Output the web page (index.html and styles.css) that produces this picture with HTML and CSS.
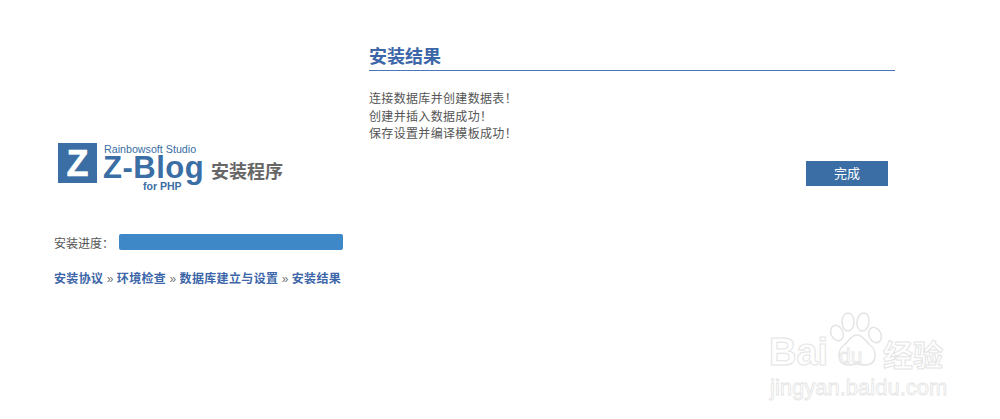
FILE: index.html
```html
<!DOCTYPE html>
<html lang="zh-CN">
<head>
<meta charset="utf-8">
<title>Z-Blog 安装程序</title>
<link rel="stylesheet" href="styles.css">
</head>
<body>
<main class="page">
  <aside class="side">
    <div class="logo">
      <div class="logo-mark">Z</div>
      <div class="logo-word">
        <div class="logo-small">Rainbowsoft Studio</div>
        <div class="logo-big">Z-Blog</div>
        <div class="logo-php">for PHP</div>
      </div>
      <div class="logo-title">安装程序</div>
    </div>
    <div class="progress">
      <span class="progress-label">安装进度：</span>
      <div class="progress-bar"></div>
    </div>
    <nav class="steps"><b>安装协议</b> <i>»</i> <b>环境检查</b> <i>»</i> <b>数据库建立与设置</b> <i>»</i> <b>安装结果</b></nav>
  </aside>
  <section class="content">
    <h2 class="title">安装结果</h2>
    <div class="messages">
      <p>连接数据库并创建数据表！</p>
      <p>创建并插入数据成功！</p>
      <p>保存设置并编译模板成功！</p>
    </div>
    <div class="actions"><button class="finish">完成</button></div>
  </section>
</main>
<div class="watermark">
  <svg class="paw" width="58" height="58" viewBox="0 0 58 58">
    <g fill="#fff" stroke="#e4e4e4" stroke-width="1.500">
      <ellipse cx="9" cy="22" rx="6" ry="8" transform="rotate(-25 9 22)"/>
      <ellipse cx="20" cy="11" rx="6" ry="9"/>
      <ellipse cx="35" cy="11" rx="6" ry="9" transform="rotate(8 35 11)"/>
      <ellipse cx="47" cy="24" rx="6" ry="8" transform="rotate(-25 47 24)"/>
      <path d="M29 24c6 0 8 6 13 10 7 5 8 20-5 20-3 0-5-1-8-1s-5 1-8 1c-13 0-12-15-5-20 5-4 7-10 13-10z"/>
    </g>
  </svg>
  <span class="wm-bai">Bai</span><span class="wm-du">du</span><span class="wm-cn">经验</span>
  <span class="wm-url">jingyan.baidu.com</span>
</div>
</body>
</html>
```
FILE: styles.css
```css
* { box-sizing: border-box; }
html, body { margin: 0; height: 100%; background: #fff; overflow: hidden; }
body { font-family: "Liberation Sans", "Noto Sans CJK SC", sans-serif; color: #555; font-size: 12px; }

.page { display: flex; width: 1000px; padding-left: 54px; }

.side { width: 291px; padding-top: 143px; flex: none; }

.logo { display: flex; height: 50px; padding-left: 4px; }
.logo-mark {
  width: 39px; height: 40px; background: #3a6ea5; color: #fff;
  font: bold 36px/41px "Liberation Sans", sans-serif; text-align: center;
  -webkit-text-stroke: 0.500px #fff;
}
.logo-word { width: 114px; padding-left: 6px; color: #3a6ea5; font-family: "Liberation Sans", sans-serif; }
.logo-small { font-size: 10.700px; line-height: 11px; padding-left: 1px; padding-top: 1px; white-space: nowrap; }
.logo-big { font-size: 31px; font-weight: bold; line-height: 28px; letter-spacing: 0.500px; white-space: nowrap; margin-top: -1.500px; }
.logo-php { font-size: 10.500px; font-weight: bold; line-height: 10px; padding-left: 40px; white-space: nowrap; margin-top: -1px; }
.logo-title { font: bold 18px/24px "Noto Sans CJK SC", sans-serif; color: #666; padding-top: 15px; white-space: nowrap; }

.progress { display: flex; align-items: center; margin-top: 41px; height: 16px; }
.progress-label { width: 65px; flex: none; padding-top: 4px; line-height: 16px; white-space: nowrap; }
.progress-bar { width: 224px; height: 16px; background: #3f88c8; border-radius: 2px; }

.steps { margin-top: 20px; line-height: 18px; white-space: nowrap; color: #777; }
.steps b { color: #3c66a8; font-weight: bold; letter-spacing: 0.350px; }
.steps i { font-style: normal; }

.content { width: 526px; margin-left: 24px; padding-top: 43px; }
.title {
  margin: 0; height: 28px; padding-top: 1px; font-size: 18px; line-height: 27px; font-weight: bold;
  color: #3c66a8; border-bottom: 1px solid #4a76b8;
}
.messages { margin-top: 20px; line-height: 17.500px; letter-spacing: 0.330px; }
.messages p { margin: 0; }
.actions { display: flex; justify-content: flex-end; padding-right: 7px; margin-top: 17px; }
.finish {
  width: 82px; height: 25px; border: 0; padding: 0; background: #3a6ea5; color: #fff;
  font: 13px/25px "Liberation Sans", "Noto Sans CJK SC", sans-serif;
}

.watermark {
  position: absolute; left: 768px; top: 311px; width: 190px; height: 90px;
  color: #fff; font-family: "Liberation Sans", sans-serif;
}
.paw { position: absolute; left: 60px; top: 0; }
.watermark span { position: absolute; -webkit-text-stroke: 1px #e4e4e4; white-space: nowrap; }
.wm-bai { left: 1px; top: 21px; font-size: 38px; line-height: 40px; font-weight: bold; }
.watermark .wm-du { left: 71px; top: 33px; font-size: 21px; line-height: 24px; -webkit-text-stroke-width: 0.800px; }
.wm-cn { left: 115px; top: 25px; font: bold 30px/34px "Noto Sans CJK SC", sans-serif; }
.watermark .wm-url { left: 2px; top: 64px; font-size: 22px; line-height: 26px; -webkit-text-stroke-width: 0.800px; }
```
